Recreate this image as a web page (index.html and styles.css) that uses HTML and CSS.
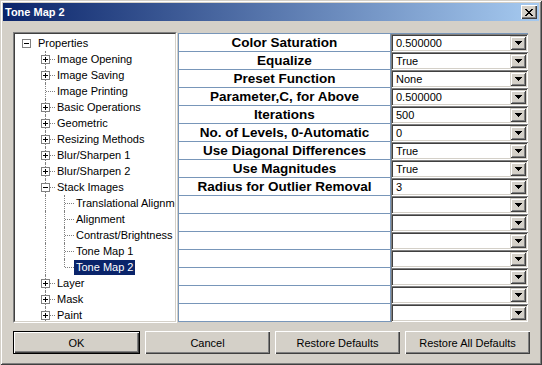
FILE: index.html
```html
<!DOCTYPE html>
<html>
<head>
<meta charset="utf-8">
<title>Tone Map 2</title>
<link rel="stylesheet" href="styles.css">
</head>
<body>
<div class="window">
  <div class="titlebar">
    <span class="title">Tone Map 2</span>
    <span class="close"><svg width="8" height="7" viewBox="0 0 8 7"><path d="M0 0h2v1H0zM6 0h2v1H6zM1 1h2v1H1zM5 1h2v1H5zM2 2h4v1H2zM3 3h2v1H3zM2 4h4v1H2zM1 5h2v1H1zM5 5h2v1H5zM0 6h2v1H0zM6 6h2v1H6z"/></svg></span>
  </div>
  <div class="content">
    <div class="main">
      <div class="tree">
        <div class="tree-in">
          <div class="row"><span class="g"><svg class="box" viewBox="0 0 9 9"><path class="bx" d="M0.5 0.5h8v8h-8z"/><path d="M2 4h5v1H2z"/></svg></span><span class="lbl">Properties</span></div>
          <div class="row"><span class="g"></span><span class="g tee"><svg class="box" viewBox="0 0 9 9"><path class="bx" d="M0.5 0.5h8v8h-8z"/><path d="M2 4h5v1H2zM4 2h1v5H4z"/></svg></span><span class="lbl">Image Opening</span></div>
          <div class="row"><span class="g"></span><span class="g tee"><svg class="box" viewBox="0 0 9 9"><path class="bx" d="M0.5 0.5h8v8h-8z"/><path d="M2 4h5v1H2zM4 2h1v5H4z"/></svg></span><span class="lbl">Image Saving</span></div>
          <div class="row"><span class="g"></span><span class="g tee"></span><span class="lbl">Image Printing</span></div>
          <div class="row"><span class="g"></span><span class="g tee"><svg class="box" viewBox="0 0 9 9"><path class="bx" d="M0.5 0.5h8v8h-8z"/><path d="M2 4h5v1H2zM4 2h1v5H4z"/></svg></span><span class="lbl">Basic Operations</span></div>
          <div class="row"><span class="g"></span><span class="g tee"><svg class="box" viewBox="0 0 9 9"><path class="bx" d="M0.5 0.5h8v8h-8z"/><path d="M2 4h5v1H2zM4 2h1v5H4z"/></svg></span><span class="lbl">Geometric</span></div>
          <div class="row"><span class="g"></span><span class="g tee"><svg class="box" viewBox="0 0 9 9"><path class="bx" d="M0.5 0.5h8v8h-8z"/><path d="M2 4h5v1H2zM4 2h1v5H4z"/></svg></span><span class="lbl">Resizing Methods</span></div>
          <div class="row"><span class="g"></span><span class="g tee"><svg class="box" viewBox="0 0 9 9"><path class="bx" d="M0.5 0.5h8v8h-8z"/><path d="M2 4h5v1H2zM4 2h1v5H4z"/></svg></span><span class="lbl">Blur/Sharpen 1</span></div>
          <div class="row"><span class="g"></span><span class="g tee"><svg class="box" viewBox="0 0 9 9"><path class="bx" d="M0.5 0.5h8v8h-8z"/><path d="M2 4h5v1H2zM4 2h1v5H4z"/></svg></span><span class="lbl">Blur/Sharpen 2</span></div>
          <div class="row"><span class="g"></span><span class="g tee"><svg class="box" viewBox="0 0 9 9"><path class="bx" d="M0.5 0.5h8v8h-8z"/><path d="M2 4h5v1H2z"/></svg></span><span class="lbl">Stack Images</span></div>
          <div class="row"><span class="g"></span><span class="g line"></span><span class="g tee"></span><span class="lbl">Translational Alignment</span></div>
          <div class="row"><span class="g"></span><span class="g line"></span><span class="g tee"></span><span class="lbl">Alignment</span></div>
          <div class="row"><span class="g"></span><span class="g line"></span><span class="g tee"></span><span class="lbl">Contrast/Brightness</span></div>
          <div class="row"><span class="g"></span><span class="g line"></span><span class="g tee"></span><span class="lbl">Tone Map 1</span></div>
          <div class="row"><span class="g"></span><span class="g line"></span><span class="g ell"></span><span class="lbl sel">Tone Map 2</span></div>
          <div class="row"><span class="g"></span><span class="g tee"><svg class="box" viewBox="0 0 9 9"><path class="bx" d="M0.5 0.5h8v8h-8z"/><path d="M2 4h5v1H2zM4 2h1v5H4z"/></svg></span><span class="lbl">Layer</span></div>
          <div class="row"><span class="g"></span><span class="g tee"><svg class="box" viewBox="0 0 9 9"><path class="bx" d="M0.5 0.5h8v8h-8z"/><path d="M2 4h5v1H2zM4 2h1v5H4z"/></svg></span><span class="lbl">Mask</span></div>
          <div class="row"><span class="g"></span><span class="g tee"><svg class="box" viewBox="0 0 9 9"><path class="bx" d="M0.5 0.5h8v8h-8z"/><path d="M2 4h5v1H2zM4 2h1v5H4z"/></svg></span><span class="lbl">Paint</span></div>
        </div>
      </div>
      <div class="grid">
        <div class="lab">Color Saturation</div>
        <div class="combo"><span class="val">0.500000</span><span class="dd"><svg width="7" height="4" viewBox="0 0 7 4"><path d="M0 0h7v1H0zM1 1h5v1H1zM2 2h3v1H2zM3 3h1v1H3z"/></svg></span></div>
        <div class="lab">Equalize</div>
        <div class="combo"><span class="val">True</span><span class="dd"><svg width="7" height="4" viewBox="0 0 7 4"><path d="M0 0h7v1H0zM1 1h5v1H1zM2 2h3v1H2zM3 3h1v1H3z"/></svg></span></div>
        <div class="lab">Preset Function</div>
        <div class="combo"><span class="val">None</span><span class="dd"><svg width="7" height="4" viewBox="0 0 7 4"><path d="M0 0h7v1H0zM1 1h5v1H1zM2 2h3v1H2zM3 3h1v1H3z"/></svg></span></div>
        <div class="lab">Parameter,C, for Above</div>
        <div class="combo"><span class="val">0.500000</span><span class="dd"><svg width="7" height="4" viewBox="0 0 7 4"><path d="M0 0h7v1H0zM1 1h5v1H1zM2 2h3v1H2zM3 3h1v1H3z"/></svg></span></div>
        <div class="lab">Iterations</div>
        <div class="combo"><span class="val">500</span><span class="dd"><svg width="7" height="4" viewBox="0 0 7 4"><path d="M0 0h7v1H0zM1 1h5v1H1zM2 2h3v1H2zM3 3h1v1H3z"/></svg></span></div>
        <div class="lab">No. of Levels, 0-Automatic</div>
        <div class="combo"><span class="val">0</span><span class="dd"><svg width="7" height="4" viewBox="0 0 7 4"><path d="M0 0h7v1H0zM1 1h5v1H1zM2 2h3v1H2zM3 3h1v1H3z"/></svg></span></div>
        <div class="lab">Use Diagonal Differences</div>
        <div class="combo"><span class="val">True</span><span class="dd"><svg width="7" height="4" viewBox="0 0 7 4"><path d="M0 0h7v1H0zM1 1h5v1H1zM2 2h3v1H2zM3 3h1v1H3z"/></svg></span></div>
        <div class="lab">Use Magnitudes</div>
        <div class="combo"><span class="val">True</span><span class="dd"><svg width="7" height="4" viewBox="0 0 7 4"><path d="M0 0h7v1H0zM1 1h5v1H1zM2 2h3v1H2zM3 3h1v1H3z"/></svg></span></div>
        <div class="lab">Radius for Outlier Removal</div>
        <div class="combo"><span class="val">3</span><span class="dd"><svg width="7" height="4" viewBox="0 0 7 4"><path d="M0 0h7v1H0zM1 1h5v1H1zM2 2h3v1H2zM3 3h1v1H3z"/></svg></span></div>
        <div class="lab"></div>
        <div class="combo"><span class="val"></span><span class="dd"><svg width="7" height="4" viewBox="0 0 7 4"><path d="M0 0h7v1H0zM1 1h5v1H1zM2 2h3v1H2zM3 3h1v1H3z"/></svg></span></div>
        <div class="lab"></div>
        <div class="combo"><span class="val"></span><span class="dd"><svg width="7" height="4" viewBox="0 0 7 4"><path d="M0 0h7v1H0zM1 1h5v1H1zM2 2h3v1H2zM3 3h1v1H3z"/></svg></span></div>
        <div class="lab"></div>
        <div class="combo"><span class="val"></span><span class="dd"><svg width="7" height="4" viewBox="0 0 7 4"><path d="M0 0h7v1H0zM1 1h5v1H1zM2 2h3v1H2zM3 3h1v1H3z"/></svg></span></div>
        <div class="lab"></div>
        <div class="combo"><span class="val"></span><span class="dd"><svg width="7" height="4" viewBox="0 0 7 4"><path d="M0 0h7v1H0zM1 1h5v1H1zM2 2h3v1H2zM3 3h1v1H3z"/></svg></span></div>
        <div class="lab"></div>
        <div class="combo"><span class="val"></span><span class="dd"><svg width="7" height="4" viewBox="0 0 7 4"><path d="M0 0h7v1H0zM1 1h5v1H1zM2 2h3v1H2zM3 3h1v1H3z"/></svg></span></div>
        <div class="lab"></div>
        <div class="combo"><span class="val"></span><span class="dd"><svg width="7" height="4" viewBox="0 0 7 4"><path d="M0 0h7v1H0zM1 1h5v1H1zM2 2h3v1H2zM3 3h1v1H3z"/></svg></span></div>
        <div class="lab"></div>
        <div class="combo"><span class="val"></span><span class="dd"><svg width="7" height="4" viewBox="0 0 7 4"><path d="M0 0h7v1H0zM1 1h5v1H1zM2 2h3v1H2zM3 3h1v1H3z"/></svg></span></div>
      </div>
    </div>
    <div class="buttons">
      <div class="btn default">OK</div>
      <div class="btn">Cancel</div>
      <div class="btn">Restore Defaults</div>
      <div class="btn">Restore All Defaults</div>
    </div>
  </div>
</div>
</body>
</html>
```

FILE: styles.css
```css
* { box-sizing: border-box; }
html, body { margin: 0; padding: 0; }
body {
  width: 542px;
  height: 365px;
  overflow: hidden;
  background: #d4d0c8;
  font-family: "Liberation Sans", Arial, sans-serif;
  font-size: 11px;
  color: #000;
}
.window {
  width: 542px;
  height: 365px;
  padding: 3px;
  background: #d4d0c8;
  box-shadow: inset 1px 1px #d4d0c8, inset -1px -1px #404040, inset 2px 2px #fff, inset -2px -2px #808080;
}
.titlebar {
  height: 18px;
  display: flex;
  align-items: center;
  padding: 0 2px 0 2px;
  background: linear-gradient(to right, #0a246a, #a6caf0);
}
.title {
  color: #fff;
  font-weight: bold;
  font-size: 11px;
}
.close {
  margin-left: auto;
  width: 16px;
  height: 14px;
  display: flex;
  align-items: center;
  justify-content: center;
  background: #d4d0c8;
  box-shadow: inset 1px 1px #fff, inset -1px -1px #404040, inset -2px -2px #808080;
}
.close svg { display: block; margin-left: -1px; }
.content { padding: 11px 0 0 10px; }
.main { display: flex; align-items: flex-start; }
.tree {
  width: 164px;
  height: 291px;
  flex: none;
  border: 1px solid;
  border-color: #808080 #fff #fff #808080;
}
.tree-in {
  width: 100%;
  height: 100%;
  overflow: hidden;
  background: #fff;
  border: 1px solid;
  border-color: #404040 #d4d0c8 #d4d0c8 #404040;
  padding: 1px 0 0 2px;
}
.row {
  display: flex;
  align-items: center;
  height: 16px;
  white-space: nowrap;
}
.g {
  position: relative;
  flex: none;
  width: 19px;
  height: 16px;
}
.g.line::before, .g.tee::before, .g.ell::before {
  content: "";
  position: absolute;
  left: 9px;
  top: 0;
  bottom: 0;
  border-left: 1px dotted #808080;
}
.g.ell::before { bottom: 8px; }
.g.tee::after, .g.ell::after {
  content: "";
  position: absolute;
  left: 10px;
  right: 0;
  top: 8px;
  border-top: 1px dotted #808080;
}
.box {
  position: absolute;
  left: 5px;
  top: 4px;
  width: 9px;
  height: 9px;
  z-index: 1;
  shape-rendering: crispEdges;
}
.box .bx { fill: #fff; stroke: #808080; stroke-width: 1; }
.lbl {
  padding: 0 2px;
  line-height: 15px;
}
.lbl.sel { background: #0a246a; color: #fff; }
.grid {
  margin: 1px 0 0 1px;
  width: 350px;
  display: grid;
  grid-template-columns: 212px 137px;
  grid-auto-rows: 18px;
  border-left: 1px solid #7896b9;
  border-top: 1px solid #7896b9;
  background: #fff;
}
.lab {
  border-right: 1px solid #7896b9;
  border-bottom: 1px solid #7896b9;
  font-weight: bold;
  font-size: 13.5px;
  line-height: 17px;
  text-align: center;
  white-space: nowrap;
}
.combo {
  display: flex;
  height: 18px;
  padding: 2px;
  background: #fff;
  box-shadow: inset 1px 1px #808080, inset -1px -1px #fff, inset 2px 2px #404040, inset -2px -2px #d4d0c8;
}
.val {
  flex: 1;
  padding-left: 3px;
  line-height: 14px;
  font-size: 11px;
}
.dd {
  width: 16px;
  height: 14px;
  display: flex;
  align-items: center;
  justify-content: center;
  background: #d4d0c8;
  box-shadow: inset 1px 1px #d4d0c8, inset -1px -1px #404040, inset 2px 2px #fff, inset -2px -2px #808080;
}
.dd svg { display: block; }
.buttons {
  display: flex;
  gap: 5px;
  width: 517px;
  margin-top: 8px;
}
.btn {
  flex: 1;
  height: 23px;
  display: flex;
  align-items: center;
  justify-content: center;
  background: #d4d0c8;
  box-shadow: inset 1px 1px #fff, inset -1px -1px #404040, inset -2px -2px #808080;
}
.btn.default {
  border: 1px solid #000;
}
```
